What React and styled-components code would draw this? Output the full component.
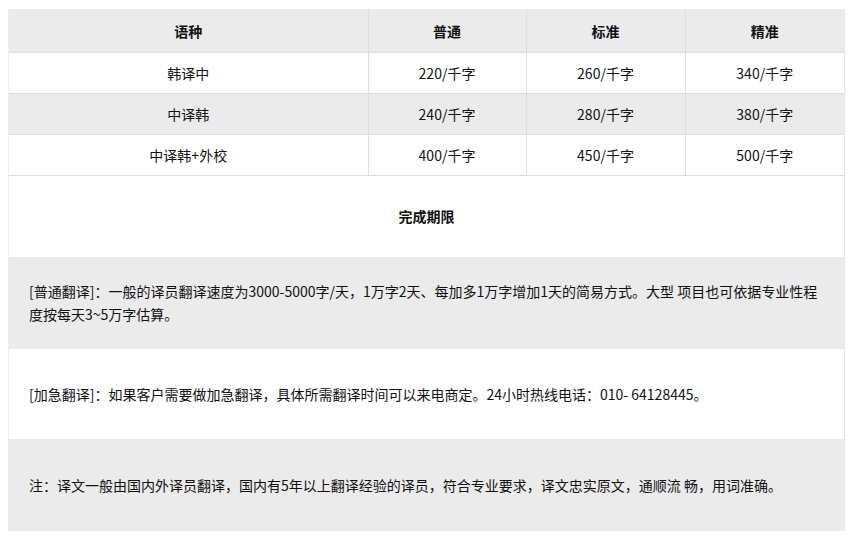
import React from "react";
import styled, { createGlobalStyle } from "styled-components";

const GlobalStyle = createGlobalStyle`
  body {
    margin: 0;
    padding: 9px 9px 0 8px;
    background: #fff;
    font-family: "Noto Sans CJK SC", "Liberation Sans", sans-serif;
    color: #111;
  }
`;

const Wrapper = styled.div`
  width: 835px;
  border-right: 1px solid #e6e6e6;
  border-left: 1px solid #eeeeee;
`;

const PriceTable = styled.table`
  width: 100%;
  border-collapse: collapse;
  table-layout: fixed;
  font-size: 14px;
`;

const Row = styled.tr`
  background: ${(props) => (props.$shaded ? "#ebebeb" : "#ffffff")};
`;

const HeadCell = styled.th`
  height: 43px;
  padding: 0;
  font-weight: 700;
  text-align: center;
  border-bottom: 1px solid #dedede;
  border-right: 1px solid #dedede;

  &:last-child {
    border-right: none;
  }
`;

const Cell = styled.td`
  height: 40px;
  padding: 0;
  text-align: center;
  border-bottom: 1px solid #dedede;
  border-right: 1px solid #dedede;

  &:last-child {
    border-right: none;
  }
`;

const Block = styled.div`
  display: flex;
  flex-direction: column;
  justify-content: center;
  height: ${(props) => props.$height}px;
  padding: 0 20px;
  box-sizing: border-box;
  background: ${(props) => (props.$shaded ? "#ebebeb" : "#ffffff")};
  font-size: 14px;
  line-height: 23px;
  text-align: ${(props) => (props.$center ? "center" : "left")};
  font-weight: ${(props) => (props.$bold ? 700 : 400)};
`;

const rows = [
  ["韩译中", "220/千字", "260/千字", "340/千字"],
  ["中译韩", "240/千字", "280/千字", "380/千字"],
  ["中译韩+外校", "400/千字", "450/千字", "500/千字"],
];

export default function App() {
  return (
    <>
      <GlobalStyle />
      <Wrapper>
        <PriceTable>
          <colgroup>
            <col style={{ width: 359 }} />
            <col style={{ width: 158 }} />
            <col style={{ width: 159 }} />
            <col />
          </colgroup>
          <thead>
            <Row $shaded>
              <HeadCell>语种</HeadCell>
              <HeadCell>普通</HeadCell>
              <HeadCell>标准</HeadCell>
              <HeadCell>精准</HeadCell>
            </Row>
          </thead>
          <tbody>
            {rows.map((r, i) => (
              <Row key={r[0]} $shaded={i % 2 === 1}>
                {r.map((c) => (
                  <Cell key={c}>{c}</Cell>
                ))}
              </Row>
            ))}
          </tbody>
        </PriceTable>
        <Block $height={81} $center $bold>
          完成期限
        </Block>
        <Block $height={92} $shaded>
          [普通翻译]：一般的译员翻译速度为3000-5000字/天，1万字2天、每加多1万字增加1天的简易方式。大型 项目也可依据专业性程度按每天3~5万字估算。
        </Block>
        <Block $height={90}>
          [加急翻译]：如果客户需要做加急翻译，具体所需翻译时间可以来电商定。24小时热线电话：010- 64128445。
        </Block>
        <Block $height={92} $shaded>
          注：译文一般由国内外译员翻译，国内有5年以上翻译经验的译员，符合专业要求，译文忠实原文，通顺流 畅，用词准确。
        </Block>
      </Wrapper>
    </>
  );
}
